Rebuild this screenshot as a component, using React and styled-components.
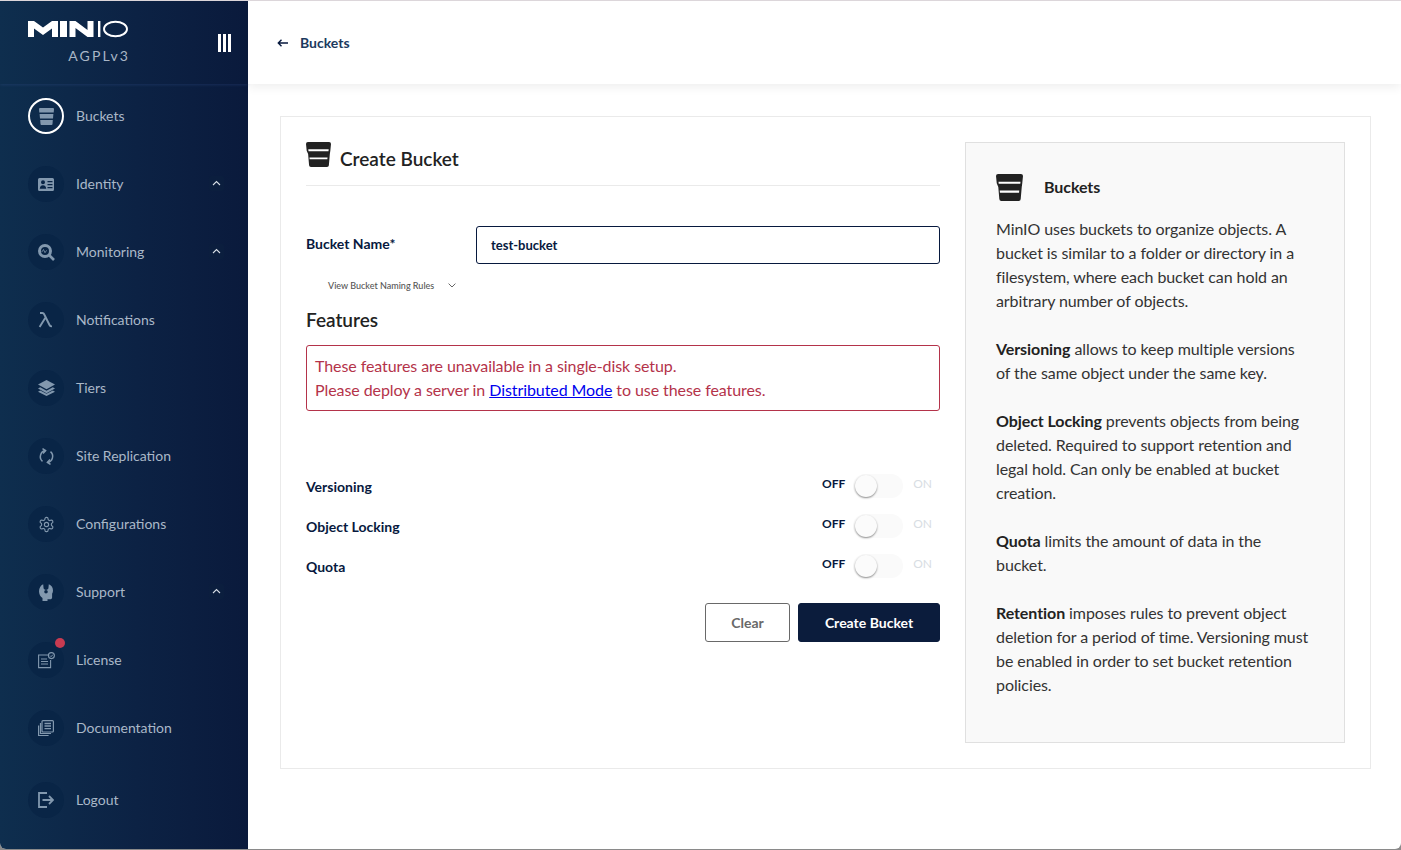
import React from 'react';
import styled, {createGlobalStyle} from 'styled-components';

const GlobalStyle = createGlobalStyle`
  html, body {
    margin: 0;
    padding: 0;
    background: #8a8a8a;
  }
  body {
    font-family: Lato, "Noto Sans", sans-serif;
    color: #07193e;
  }
  * {
    box-sizing: border-box;
  }
`;

const Frame = styled.div`
  display: flex;
  width: 1401px;
  height: 849px;
  overflow: hidden;
  background: #fff;
  border-top: 1px solid #dcd6da;
  border-radius: 0 0 6px 6px;
`;

const Sidebar = styled.aside`
  display: flex;
  flex-direction: column;
  flex: 0 0 248px;
  background: linear-gradient(90deg, #0e2e4e 0%, #0c2244 55%, #0a1a3c 100%);
`;

const Brand = styled.div`
  display: flex;
  align-items: flex-start;
  justify-content: space-between;
  flex: 0 0 83px;
  padding: 19px 16px 0 28px;
  box-shadow: 0 1px 3px rgba(60, 90, 150, 0.3);
`;

const LogoBlock = styled.div`
  display: flex;
  flex-direction: column;
  align-items: flex-end;
  width: 100px;
`;

const License = styled.div`
  margin-top: 10px;
  font-size: 14px;
  line-height: 16px;
  letter-spacing: 2.1px;
  color: #a9b6c6;
  margin-right: -2px;
`;

const Collapse = styled.div`
  display: flex;
  gap: 2px;
  margin: 14px 1px 0 0;

  span {
    width: 3px;
    height: 18px;
    background: #fff;
  }
`;

const Nav = styled.nav`
  display: flex;
  flex-direction: column;
  gap: 32px;
  padding: 14px 24px 0 28px;
`;

const NavRow = styled.div`
  display: flex;
  align-items: center;
  height: 36px;
  gap: 12px;
  margin-top: ${p => p.$push || 0}px;
`;

const IconCircle = styled.div`
  position: relative;
  display: flex;
  align-items: center;
  justify-content: center;
  flex: 0 0 36px;
  height: 36px;
  border-radius: 50%;
  background: ${p => p.$active ? 'transparent' : '#092546'};
  border: ${p => p.$active ? '2px solid #fff' : 'none'};
  color: #8298ae;
`;

const Badge = styled.span`
  position: absolute;
  top: -4px;
  right: -1px;
  width: 10px;
  height: 10px;
  border-radius: 50%;
  background: #c83b51;
`;

const NavLabel = styled.span`
  flex: 1;
  font-size: 14px;
  line-height: 18px;
  color: #aab8c8;
`;

const Caret = styled.span`
  display: flex;
  align-items: center;
  justify-content: center;
  width: 15px;
  height: 15px;
  margin-top: -2px;
  background: #0b1e3e;
  border-radius: 2px;
`;

const Main = styled.main`
  flex: 1;
  display: flex;
  flex-direction: column;
  min-width: 0;
`;

const TopBar = styled.header`
  display: flex;
  align-items: center;
  flex: 0 0 83px;
  padding: 0 0 0 29px;
  gap: 12px;
  background: #fff;
  box-shadow: 0 3px 10px rgba(0, 0, 0, 0.07);
`;

const BackLabel = styled.span`
  font-size: 14px;
  font-weight: 700;
  color: #1c3a5e;
  margin-top: -1px;
`;

const Content = styled.div`
  padding: 32px 30px 0 32px;
`;

const Card = styled.section`
  display: flex;
  justify-content: space-between;
  height: 653px;
  padding: 25px;
  border: 1px solid #eaeaea;
  background: #fff;
`;

const FormColumn = styled.div`
  display: flex;
  flex-direction: column;
  width: 634px;
`;

const CardTitle = styled.div`
  display: flex;
  align-items: flex-end;
  gap: 9px;
  height: 44px;
  border-bottom: 1px solid #eaeaea;
  padding-bottom: 14px;
  color: #222;

  h1 {
    margin: 0;
    font-size: 19px;
    line-height: 24px;
    font-weight: 600;
    color: #222;
  }

  svg {
    margin-bottom: 4px;
  }
`;

const FieldRow = styled.div`
  display: flex;
  align-items: center;
  margin-top: 40px;
  height: 38px;
`;

const FieldLabel = styled.label`
  flex: 0 0 170px;
  font-size: 14px;
  font-weight: 700;
  color: #07193e;
  margin-top: -3px;
`;

const TextBox = styled.div`
  flex: 1;
  height: 38px;
  display: flex;
  align-items: center;
  padding: 0 14px;
  border: 1px solid #07193e;
  border-radius: 3px;
  font-size: 13px;
  font-weight: 700;
  color: #07193e;
`;

const RulesToggle = styled.div`
  display: flex;
  align-items: center;
  gap: 14px;
  margin: 14px 0 0 22px;
  height: 14px;
  font-size: 9px;
  font-weight: 500;
  color: #555;
`;

const SectionTitle = styled.h2`
  margin: 17px 0 0;
  font-size: 19px;
  line-height: 22px;
  font-weight: 600;
  color: #222;
`;

const Warning = styled.div`
  margin-top: 14px;
  height: 66px;
  padding: 8px 8px;
  border: 1px solid #b4334a;
  border-radius: 3px;
  font-size: 16px;
  line-height: 24px;
  letter-spacing: -0.08px;
  color: #b4334a;

  a {
    color: #0000ee;
    text-decoration: underline;
  }
`;

const Switches = styled.div`
  display: flex;
  flex-direction: column;
  gap: 16px;
  margin-top: 63px;
`;

const SwitchRow = styled.div`
  display: flex;
  align-items: center;
  justify-content: space-between;
  height: 24px;
`;

const SwitchName = styled.span`
  font-size: 14px;
  font-weight: 700;
  color: #07193e;
`;

const SwitchGroup = styled.div`
  display: flex;
  align-items: center;
  margin-top: -5px;
  margin-right: 8px;
  font-size: 12px;
  line-height: 14px;
`;

const SwitchOff = styled.span`
  font-weight: 700;
  color: #07193e;
`;

const SwitchOn = styled.span`
  color: #d8dde3;
`;

const Track = styled.span`
  position: relative;
  display: block;
  width: 50px;
  height: 24px;
  margin: 5px 10px 0 8px;
  border-radius: 12px;
  background: #fafafa;
`;

const Thumb = styled.span`
  position: absolute;
  left: 2px;
  top: 1px;
  width: 22px;
  height: 22px;
  border-radius: 50%;
  background: #fbfbfb;
  box-shadow: 0 1px 2px rgba(0, 0, 0, 0.45);
`;

const Actions = styled.div`
  display: flex;
  justify-content: flex-end;
  gap: 8px;
  margin-top: 25px;
`;

const Button = styled.button`
  height: 39px;
  width: ${p => p.$primary ? 142 : 85}px;
  padding: 0;
  border-radius: 3px;
  border: 1px solid ${p => p.$primary ? '#0b1c3c' : '#696969'};
  background: ${p => p.$primary ? '#0b1c3c' : '#fff'};
  color: ${p => p.$primary ? '#fff' : '#696969'};
  font-family: Lato, sans-serif;
  font-size: 14px;
  font-weight: 700;
`;

const HelpBox = styled.aside`
  width: 380px;
  height: 601px;
  padding: 30px 34px 0 30px;
  background: #f9f9f9;
  border: 1px solid #e0e0e0;
  font-size: 16px;
  line-height: 24px;
  letter-spacing: -0.08px;
  color: #333;

  p {
    margin: 0 0 24px;
  }

  b {
    font-weight: 700;
    color: #222;
  }
`;

const HelpTitle = styled.div`
  display: flex;
  align-items: center;
  gap: 21px;
  height: 28px;
  margin-bottom: 16px;
  font-size: 16px;
  font-weight: 700;
  color: #222;
`;

const BucketIcon = ({size = 26, line = '#fff'}) => (
  <svg width={size} height={size} viewBox="0 0 26 26">
    <path fill="currentColor" d="M2 0h22a2 2 0 0 1 2 2l-.7 7-.5 3.500-1 11.600a2 2 0 0 1-2 1.900H5.200a2 2 0 0 1-2-1.900l-1-11.600L.7 9 0 2a2 2 0 0 1 2-2z"/>
    <path fill={line} d="M2.400 7.500h21.200l-.2 2H2.600zM3.600 16h18.800l-.2 2H3.800z"/>
  </svg>
);

const MenuBucket = () => (
  <svg width="15" height="17" viewBox="0 0 15 17">
    <path fill="currentColor" d="M1 0h13a1 1 0 0 1 1 1l-.3 3.400H.3L0 1a1 1 0 0 1 1-1z"/>
    <path fill="currentColor" d="M.6 6h13.800l-.4 4.400H1z"/>
    <path fill="currentColor" d="M1.200 12h12.600l-.3 4a1 1 0 0 1-1 1H2.500a1 1 0 0 1-1-1z"/>
  </svg>
);

const IdentityIcon = () => (
  <svg width="16" height="13" viewBox="0 0 16 13">
    <path fill="currentColor" fillRule="evenodd" d="M1.500 0h13A1.500 1.500 0 0 1 16 1.500v10a1.500 1.500 0 0 1-1.500 1.500h-13A1.500 1.500 0 0 1 0 11.500v-10A1.500 1.500 0 0 1 1.500 0zM5 2.200a2 2 0 1 0 0 4 2 2 0 0 0 0-4zM1.800 10.800h6.400c0-2-1.200-3.600-3.200-3.600s-3.200 1.600-3.200 3.600zM9.500 3v1.200h5V3zm0 3v1.200h5V6zm0 3v1.200h5V9z"/>
  </svg>
);

const MonitoringIcon = () => (
  <svg width="17" height="17" viewBox="0 0 17 17" fill="none">
    <circle cx="7" cy="7" r="5.500" stroke="currentColor" strokeWidth="3"/>
    <path d="M11 11l5 5" stroke="currentColor" strokeWidth="2.600"/>
    <path d="M3.800 8l1.700-2.500L7 8.700 8.600 6.300" stroke="currentColor" strokeWidth="0.800"/>
  </svg>
);

const LambdaIcon = () => (
  <svg width="16" height="16" viewBox="0 0 16 16" fill="none">
    <path d="M2 1h2.400c1 0 1.500.6 1.900 1.500L11.500 13c.4.900 1 1.400 2.500 1.400M7.200 6L1.600 15" stroke="currentColor" strokeWidth="1.900"/>
  </svg>
);

const TiersIcon = () => (
  <svg width="17" height="16" viewBox="0 0 17 16">
    <path fill="currentColor" d="M8.500 0L17 4.600 8.500 9.200 0 4.600z"/>
    <path fill="currentColor" d="M2.200 7.300L0 8.600l8.500 4.600L17 8.600l-2.200-1.300-6.300 3.400z"/>
    <path fill="currentColor" d="M2.200 10.600L0 11.800 8.500 16 17 11.800l-2.200-1.200-6.300 3.200z"/>
  </svg>
);

const ReplicationIcon = () => (
  <svg width="17" height="17" viewBox="0 0 17 17" fill="none" stroke="currentColor" strokeWidth="1.500">
    <path d="M7.500 2.600A6.200 6.200 0 0 0 4.500 13.400M9.500 14.400A6.200 6.200 0 0 0 12.500 3.600"/>
    <path d="M4.500 .6l3.100 2-2.600 2.800M12.500 16.400l-3.100-2 2.600-2.800"/>
  </svg>
);

const GearIcon = () => (
  <svg width="17" height="17" viewBox="0 0 24 24" fill="none" stroke="currentColor" strokeWidth="1.600">
    <path d="M12.220 2h-.44a2 2 0 0 0-2 2v.18a2 2 0 0 1-1 1.730l-.43.25a2 2 0 0 1-2 0l-.15-.08a2 2 0 0 0-2.730.730l-.22.38a2 2 0 0 0 .73 2.730l.15.1a2 2 0 0 1 1 1.720v.51a2 2 0 0 1-1 1.740l-.15.09a2 2 0 0 0-.73 2.730l.22.38a2 2 0 0 0 2.730.73l.15-.08a2 2 0 0 1 2 0l.43.25a2 2 0 0 1 1 1.730V20a2 2 0 0 0 2 2h.44a2 2 0 0 0 2-2v-.18a2 2 0 0 1 1-1.730l.43-.25a2 2 0 0 1 2 0l.15.08a2 2 0 0 0 2.730-.73l.22-.39a2 2 0 0 0-.73-2.730l-.15-.08a2 2 0 0 1-1-1.740v-.5a2 2 0 0 1 1-1.740l.15-.09a2 2 0 0 0 .73-2.730l-.22-.38a2 2 0 0 0-2.730-.73l-.15.08a2 2 0 0 1-2 0l-.43-.25a2 2 0 0 1-1-1.730V4a2 2 0 0 0-2-2z"/>
    <circle cx="12" cy="12" r="3"/>
  </svg>
);

const SupportIcon = () => (
  <svg width="14" height="17" viewBox="0 0 14 17">
    <path fill="currentColor" fillRule="evenodd" d="M4.200.3L4.600 4.500a2.700 2.700 0 0 0 4.800 0L9.800.3C12.300 1.200 14 3.600 14 6.400c0 1.200-.3 2.300-.9 3.300v3.700c0 1-.8 1.800-1.800 1.800H8.500V17H3.500v-3C1.300 12.800 0 10.200 0 7.300 0 4.100 1.700 1.300 4.200.3zM7 6a1.800 1.800 0 1 0 0 3.600A1.800 1.800 0 0 0 7 6z"/>
  </svg>
);

const LicenseIcon = () => (
  <svg width="17" height="17" viewBox="0 0 17 17" fill="none" stroke="currentColor" strokeWidth="1.100">
    <path d="M10.500 3H.6v12.600h12V8"/>
    <path d="M3 7h6M3 9.500h7M3 12h7" strokeWidth="1.200"/>
    <circle cx="13.400" cy="3.600" r="3"/>
    <path d="M12 3.600l1.100 1.100 1.700-2" strokeWidth="1"/>
  </svg>
);

const DocsIcon = () => (
  <svg width="16" height="16" viewBox="0 0 16 16" fill="none" stroke="currentColor" strokeWidth="1.200">
    <rect x="4" y="0.600" width="11.400" height="11.400" rx="1"/>
    <path d="M6.500 3.500h6.500M6.500 6h6.500M6.500 8.700h6.500" strokeWidth="1.300"/>
    <path d="M2.500 3v10.500h10.500M.6 5.500v10h10"/>
  </svg>
);

const LogoutIcon = () => (
  <svg width="16" height="16" viewBox="0 0 16 16" fill="none" stroke="currentColor" strokeWidth="1.800">
    <path d="M9 1H1v14h8"/>
    <path d="M4.500 8H15M11 4l4 4-4 4"/>
  </svg>
);

const ChevronUp = () => (
  <svg width="9" height="6" viewBox="0 0 9 6" fill="none" stroke="#d5dce4" strokeWidth="1.100">
    <path d="M1 5l3.500-3.500L8 5"/>
  </svg>
);

const MinioLogo = () => (
  <svg width="100" height="18" viewBox="0 0 100 18">
    <path fill="#fff" d="M0 17V1h6l9 6.500L24 1h6v16h-6V8.500L15 15 6 8.500V17z"/>
    <path fill="#fff" d="M32 1h7v16h-7z"/>
    <path fill="#fff" d="M41.500 1h6l12 9V1h6v16h-6L47.500 8v9h-6z"/>
    <path fill="#fff" d="M70 1h2.400v16H70z"/>
    <ellipse cx="87.500" cy="9" rx="11.500" ry="7.200" fill="none" stroke="#fff" strokeWidth="1.900"/>
  </svg>
);

const BackArrow = () => (
  <svg width="11" height="8" viewBox="0 0 11 8" fill="none" stroke="#07193e" strokeWidth="1.400">
    <path d="M11 4H1.500M4.500 .8L1.300 4l3.200 3.200"/>
  </svg>
);

const ChevronDown = () => (
  <svg width="8" height="5" viewBox="0 0 8 5" fill="none" stroke="#555" strokeWidth="0.900">
    <path d="M.6.600L4 4 7.400.6"/>
  </svg>
);

const menu = [
  {label: 'Buckets', icon: <MenuBucket/>, active: true},
  {label: 'Identity', icon: <IdentityIcon/>, caret: true},
  {label: 'Monitoring', icon: <MonitoringIcon/>, caret: true},
  {label: 'Notifications', icon: <LambdaIcon/>},
  {label: 'Tiers', icon: <TiersIcon/>},
  {label: 'Site Replication', icon: <ReplicationIcon/>},
  {label: 'Configurations', icon: <GearIcon/>},
  {label: 'Support', icon: <SupportIcon/>, caret: true},
  {label: 'License', icon: <LicenseIcon/>, badge: true},
  {label: 'Documentation', icon: <DocsIcon/>},
  {label: 'Logout', icon: <LogoutIcon/>, push: 4},
];

const features = ['Versioning', 'Object Locking', 'Quota'];

const App = () => {
  return (
    <Frame>
      <GlobalStyle/>
      <Sidebar>
        <Brand>
          <LogoBlock>
            <MinioLogo/>
            <License>AGPLv3</License>
          </LogoBlock>
          <Collapse><span/><span/><span/></Collapse>
        </Brand>
        <Nav>
          {menu.map(item => (
            <NavRow key={item.label} $push={item.push}>
              <IconCircle $active={item.active}>
                {item.icon}
                {item.badge ? <Badge/> : null}
              </IconCircle>
              <NavLabel>{item.label}</NavLabel>
              {item.caret ? <Caret><ChevronUp/></Caret> : null}
            </NavRow>
          ))}
        </Nav>
      </Sidebar>
      <Main>
        <TopBar>
          <BackArrow/>
          <BackLabel>Buckets</BackLabel>
        </TopBar>
        <Content>
          <Card>
            <FormColumn>
              <CardTitle>
                <BucketIcon size={25}/>
                <h1>Create Bucket</h1>
              </CardTitle>
              <FieldRow>
                <FieldLabel>Bucket Name*</FieldLabel>
                <TextBox>test-bucket</TextBox>
              </FieldRow>
              <RulesToggle>View Bucket Naming Rules <ChevronDown/></RulesToggle>
              <SectionTitle>Features</SectionTitle>
              <Warning>
                These features are unavailable in a single-disk setup.<br/>
                Please deploy a server in <a href="#distributed">Distributed Mode</a> to use these features.
              </Warning>
              <Switches>
                {features.map(name => (
                  <SwitchRow key={name}>
                    <SwitchName>{name}</SwitchName>
                    <SwitchGroup>
                      <SwitchOff>OFF</SwitchOff>
                      <Track><Thumb/></Track>
                      <SwitchOn>ON</SwitchOn>
                    </SwitchGroup>
                  </SwitchRow>
                ))}
              </Switches>
              <Actions>
                <Button>Clear</Button>
                <Button $primary>Create Bucket</Button>
              </Actions>
            </FormColumn>
            <HelpBox>
              <HelpTitle>
                <BucketIcon size={27}/>
                Buckets
              </HelpTitle>
              <p>MinIO uses buckets to organize objects. A bucket is similar to a folder or directory in a filesystem, where each bucket can hold an arbitrary number of objects.</p>
              <p><b>Versioning</b> allows to keep multiple versions of the same object under the same key.</p>
              <p><b>Object Locking</b> prevents objects from being deleted. Required to support retention and legal hold. Can only be enabled at bucket creation.</p>
              <p><b>Quota</b> limits the amount of data in the bucket.</p>
              <p><b>Retention</b> imposes rules to prevent object deletion for a period of time. Versioning must be enabled in order to set bucket retention policies.</p>
            </HelpBox>
          </Card>
        </Content>
      </Main>
    </Frame>
  );
};

export default App;
